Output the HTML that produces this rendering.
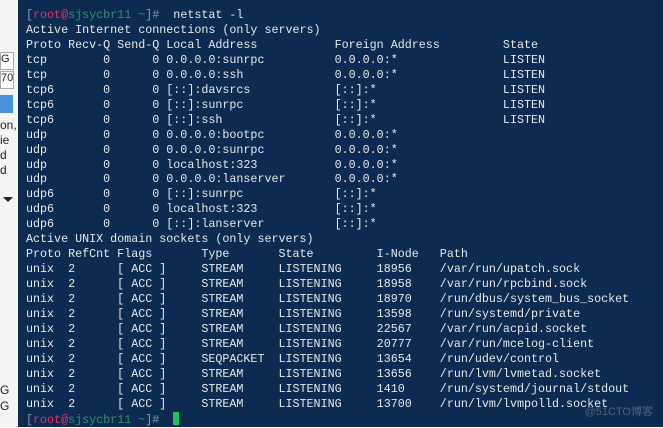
<!DOCTYPE html>
<html><head><style>
html,body{margin:0;padding:0;width:663px;height:427px;overflow:hidden;background:#fff}
#left{position:absolute;left:0;top:0;width:18px;height:427px;background:#f4f4f4;border-right:1px solid #ccc;font:12px "Liberation Sans",sans-serif;color:#222}
#left div{position:absolute;left:0}
#term{position:absolute;left:18px;top:0;width:645px;height:427px;background:#0d2b50}
pre{margin:0;position:absolute;left:8px;top:8px;font:11.7px/14.96px "Liberation Mono",monospace;color:#e6e8ec;white-space:pre}
.r{color:#e0306a}.g{color:#2f8f6f}.b{color:#8899bb}
.cur{display:inline-block;width:6px;height:13px;background:#20c060;vertical-align:-2px}
#wm{position:absolute;right:10px;bottom:8px;font:11px "Liberation Sans","Noto Sans CJK SC",sans-serif;color:rgba(200,200,210,.35)}
</style></head><body>
<div id="left">
<div style="top:52px;width:12px;height:16px;border:1px solid #aaa;background:#fff;font-size:11px">G</div>
<div style="top:71px;width:12px;height:16px;border:1px solid #aaa;background:#fff;font-size:11px">70</div>
<div style="top:95px;width:13px;height:18px;background:#4a90d9"></div>
<div style="top:118px">on,</div>
<div style="top:133px">ie</div>
<div style="top:148px">d</div>
<div style="top:163px">d</div>
<div style="top:197px;left:3px;width:0;height:0;border-left:5px solid transparent;border-right:5px solid transparent;border-top:5px solid #222"></div>
<div style="top:383px">G</div>
<div style="top:399px">G</div>
</div>
<div id="term"><pre><span class="b">[</span><span class="r">root@</span><span class="g">sjsycbr11 ~</span><span class="b">]#</span>  netstat -l
Active Internet connections (only servers)
Proto Recv-Q Send-Q Local Address           Foreign Address         State
tcp        0      0 0.0.0.0:sunrpc          0.0.0.0:*               LISTEN
tcp        0      0 0.0.0.0:ssh             0.0.0.0:*               LISTEN
tcp6       0      0 [::]:davsrcs            [::]:*                  LISTEN
tcp6       0      0 [::]:sunrpc             [::]:*                  LISTEN
tcp6       0      0 [::]:ssh                [::]:*                  LISTEN
udp        0      0 0.0.0.0:bootpc          0.0.0.0:*
udp        0      0 0.0.0.0:sunrpc          0.0.0.0:*
udp        0      0 localhost:323           0.0.0.0:*
udp        0      0 0.0.0.0:lanserver       0.0.0.0:*
udp6       0      0 [::]:sunrpc             [::]:*
udp6       0      0 localhost:323           [::]:*
udp6       0      0 [::]:lanserver          [::]:*
Active UNIX domain sockets (only servers)
Proto RefCnt Flags       Type       State         I-Node   Path
unix  2      [ ACC ]     STREAM     LISTENING     18956    /var/run/upatch.sock
unix  2      [ ACC ]     STREAM     LISTENING     18958    /var/run/rpcbind.sock
unix  2      [ ACC ]     STREAM     LISTENING     18970    /run/dbus/system_bus_socket
unix  2      [ ACC ]     STREAM     LISTENING     13598    /run/systemd/private
unix  2      [ ACC ]     STREAM     LISTENING     22567    /var/run/acpid.socket
unix  2      [ ACC ]     STREAM     LISTENING     20777    /var/run/mcelog-client
unix  2      [ ACC ]     SEQPACKET  LISTENING     13654    /run/udev/control
unix  2      [ ACC ]     STREAM     LISTENING     13656    /run/lvm/lvmetad.socket
unix  2      [ ACC ]     STREAM     LISTENING     1410     /run/systemd/journal/stdout
unix  2      [ ACC ]     STREAM     LISTENING     13700    /run/lvm/lvmpolld.socket
<span class="b">[</span><span class="r">root@</span><span class="g">sjsycbr11 ~</span><span class="b">]#</span>  <span class="cur"></span></pre>
<div id="wm">@51CTO博客</div>
</div>
</body></html>
